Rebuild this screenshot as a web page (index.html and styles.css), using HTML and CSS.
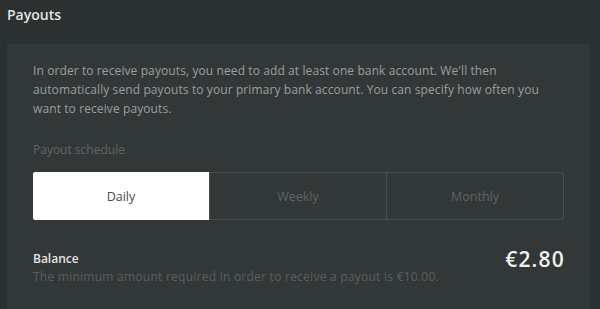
FILE: index.html
```html
<!DOCTYPE html>
<html lang="en">
<head>
    <meta charset="UTF-8">
    <title>Payouts</title>
    <link rel="stylesheet" href="styles.css">
</head>
<body>
    <div class="page">
        <h1 class="title">Payouts</h1>
        <div class="panel">
            <p class="intro">In order to receive payouts, you need to add at least one bank account. We'll then automatically send payouts to your primary bank account. You can specify how often you want to receive payouts.</p>
            <p class="label">Payout schedule</p>
            <div class="schedule">
                <button class="option active">Daily</button>
                <button class="option">Weekly</button>
                <button class="option">Monthly</button>
            </div>
            <div class="balance">
                <div class="balance-info">
                    <div class="balance-title">Balance</div>
                    <div class="balance-note">The minimum amount required in order to receive a payout is €10.00.</div>
                </div>
                <div class="balance-amount">€2.80</div>
            </div>
        </div>
    </div>
</body>
</html>
```

FILE: styles.css
```css
html, body {
    margin: 0;
    height: 100%;
}
body {
    background: #2b3030;
    font-family: "Open Sans", sans-serif;
    overflow: hidden;
}
.page {
    width: 590px;
    padding-left: 7px;
    box-sizing: border-box;
}
.title {
    margin: 0;
    padding-top: 5px;
    height: 44px;
    box-sizing: border-box;
    font-size: 14px;
    line-height: 20px;
    font-weight: 600;
    color: #e4e6e6;
}
.panel {
    background: #323838;
    padding: 17px 26px 0 26px;
    height: 265px;
    overflow: hidden;
    box-sizing: border-box;
}
.intro {
    margin: 0;
    max-width: 522px;
    font-size: 12px;
    line-height: 19px;
    letter-spacing: 0.1px;
    color: #9a9f9f;
}
.label {
    margin: 24px 0 14px;
    font-size: 12px;
    line-height: 16px;
    color: #606666;
}
.schedule {
    display: flex;
    border: 1px solid #4a5050;
    border-radius: 3px;
    height: 48px;
    box-sizing: border-box;
}
.option {
    flex: 1;
    background: none;
    border: none;
    font-family: inherit;
    font-size: 12.5px;
    color: #5f6565;
}
.option + .option {
    border-left: 1px solid #4a5050;
}
.option.active {
    background: #fff;
    color: #4a4a4a;
    border-radius: 2px 0 0 2px;
    margin: -1px 0 -1px -1px;
}
.balance {
    display: flex;
    justify-content: space-between;
    align-items: flex-start;
    margin-top: 31px;
}
.balance-title {
    font-size: 12px;
    font-weight: 600;
    color: #e4e6e6;
    line-height: 16px;
}
.balance-note {
    font-size: 12px;
    color: #5a6060;
    line-height: 20px;
    letter-spacing: 0.25px;
}
.balance-amount {
    font-size: 21px;
    font-weight: 600;
    letter-spacing: 1.2px;
    color: #f0f2f2;
    line-height: 24px;
    margin-top: -4px;
    margin-right: -1px;
}
```
